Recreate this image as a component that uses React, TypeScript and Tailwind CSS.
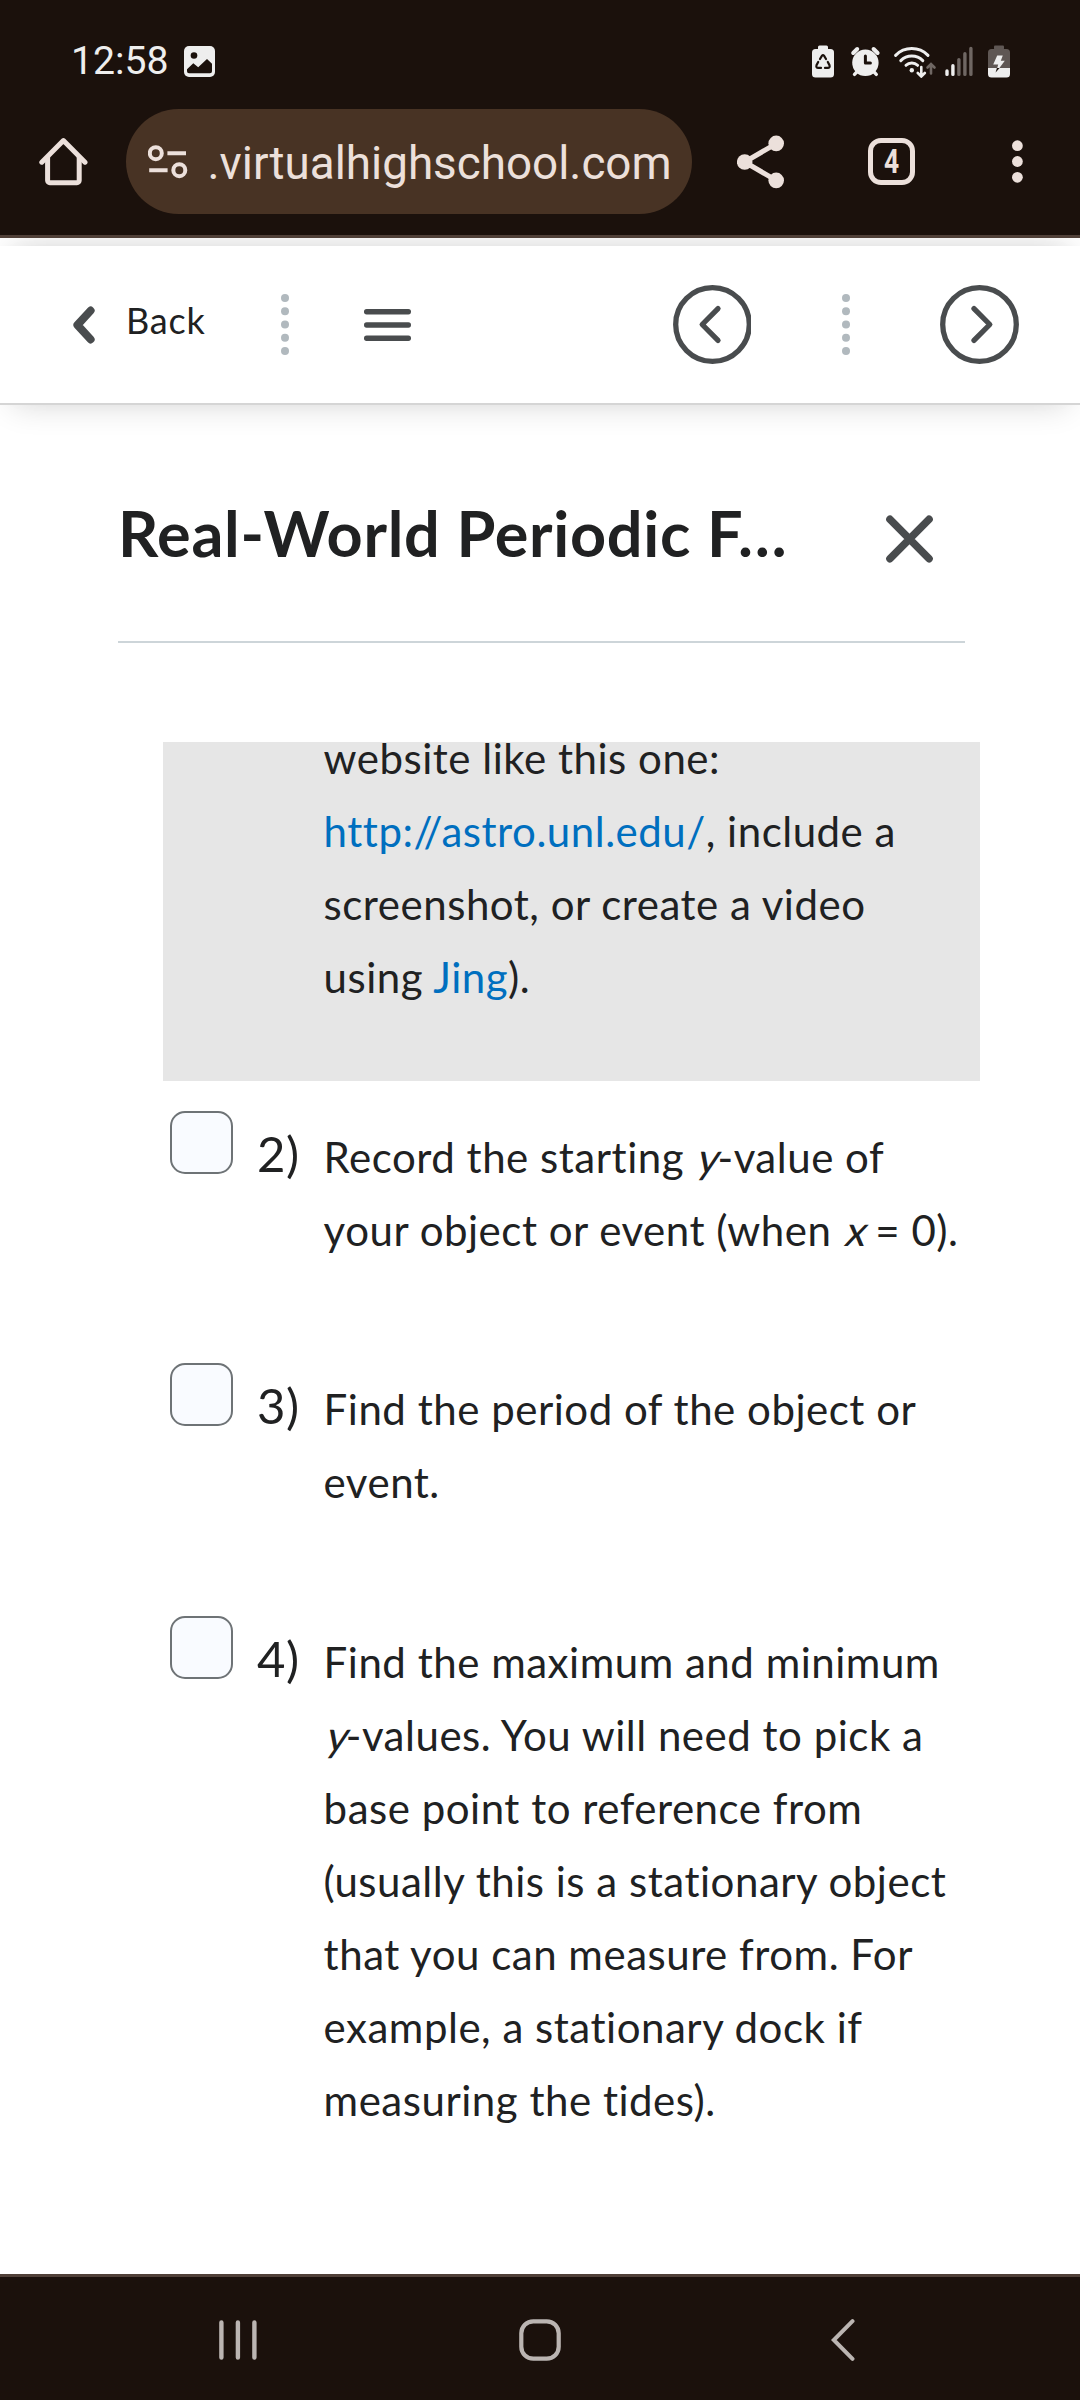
interface Task {
  label: string;
  content: React.ReactNode;
}

// slanted regular weight, leaning around the text baseline
function Variable({ name }: { name: string }) {
  return <em className="inline-block origin-[0_72%] -skew-x-14 not-italic">{name}</em>;
}

const tasks: Task[] = [
  {
    label: "2)",
    content: (
      <>
        Record the starting <Variable name="y" />
        -value of your object or event (when <Variable name="x" /> = 0).
      </>
    ),
  },
  {
    label: "3)",
    content: <>Find the period of the object or event.</>,
  },
  {
    label: "4)",
    content: (
      <>
        Find the maximum and minimum <Variable name="y" />
        -values. You will need to pick a base point to reference from (usually this is a
        stationary object that you can measure from. For example, a stationary dock if measuring
        the tides).
      </>
    ),
  },
];

function StatusIcons() {
  return (
    <div className="flex items-center">
      {/* battery protection */}
      <svg width="22" height="33" viewBox="0 0 22 33" fill="none">
        <rect x="6" y="0.5" width="10" height="7" rx="1.5" fill="#eeeeee" />
        <rect y="4" width="22" height="28.5" rx="3.5" fill="#eeeeee" />
        <path
          d="M8 14 10 10.6Q11 9.4 12 10.6L14 14M6.2 17 4.5 20.2Q3.8 22.9 6.2 22.9H9M15.8 17l1.7 3.2Q18.2 22.9 15.8 22.9H13"
          stroke="#1b110c"
          strokeWidth="2.2"
          strokeLinecap="round"
        />
      </svg>
      {/* alarm */}
      <svg className="ml-4" width="31" height="33" viewBox="0 -1 31 33" fill="none">
        <circle cx="15.4" cy="16.8" r="13.2" fill="#eeeeee" />
        <path d="M3.2 7 7.2 3M23.6 3l4 4" stroke="#eeeeee" strokeWidth="4" strokeLinecap="round" />
        <path d="m4.5 28.4 3.5-3.6M26.3 28.4l-3.5-3.6" stroke="#eeeeee" strokeWidth="3.4" strokeLinecap="round" />
        <path d="M15.4 10v7h5" stroke="#1b110c" strokeWidth="3" strokeLinecap="round" strokeLinejoin="round" />
      </svg>
      {/* wifi */}
      <svg className="ml-3" width="44" height="33" viewBox="0 0 44 33" fill="none" strokeLinecap="round">
        <g stroke="#eeeeee" strokeWidth="3">
          <path d="M2.6 10.4a22.7 22.7 0 0 1 32.4 0" />
          <path d="M7.8 15.6a15.5 15.5 0 0 1 22 0" />
          <path d="M13 20.3a8.3 8.3 0 0 1 11.6 0" />
        </g>
        <circle cx="18.8" cy="25.2" r="2.2" fill="#eeeeee" />
        <path d="M28.3 22v9M24.8 28l3.5 3.5 3.5-3.5" stroke="#eeeeee" strokeWidth="2.6" />
        <path d="M38 28.5v-9M34.5 22.5 38 19l3.5 3.5" stroke="#6f6763" strokeWidth="2.6" />
      </svg>
      {/* signal */}
      <svg className="ml-2" width="29" height="33" viewBox="0 -1 29 33" fill="none" strokeWidth="3.4" strokeLinecap="round">
        <path d="M2 25v3.4M7.9 19.8v8.6" stroke="#eeeeee" />
        <path d="M13.9 13.6v14.8M19.9 7.8v20.6M25.9 2.4v26" stroke="#6f6763" />
      </svg>
      {/* charging */}
      <svg className="ml-3.5" width="22" height="33" viewBox="0 0 22 33">
        <rect x="6" y="0.5" width="10" height="4" rx="1" fill="#5f5754" />
        <path d="M3.5 4h15A3.5 3.5 0 0 1 22 7.5V23H0V7.5A3.5 3.5 0 0 1 3.5 4z" fill="#5f5754" />
        <path d="M0 23h22v6a3.5 3.5 0 0 1-3.5 3.5h-15A3.5 3.5 0 0 1 0 29z" fill="#eeeeee" />
        <path d="M9.2 10.5h5.6l-2 5.3h4L11.4 23H9.2l1-3.5H5.2z" fill="#eeeeee" />
        <path d="M8.9 23h2.7L7.6 27.4z" fill="#1b110c" />
      </svg>
    </div>
  );
}

function StatusBar() {
  return (
    <div className="flex h-[109px] items-center pt-[13px] pr-[70px] pl-[71px] text-[#eeeeee]">
      <span className="pt-0.5 text-[39.2px] leading-none">12:58</span>
      <svg className="mr-auto ml-[15px]" width="31" height="31" viewBox="0 0 31 31">
        <rect width="31" height="31" rx="5" fill="#eeeeee" />
        <circle cx="10" cy="9.5" r="3.3" fill="#1b110c" />
        <path d="M3 23.2 9.3 17.3 14.2 21.2 23 13l5 4.8v7.4a2 2 0 0 1-2 2H5a2 2 0 0 1-2-2z" fill="#1b110c" />
      </svg>
      <StatusIcons />
    </div>
  );
}

function AddressBar() {
  return (
    <div className="flex h-[105px] items-center pl-[39px] text-[#ece0db]">
      <svg width="49" height="49" viewBox="0 0 49 49" fill="none" stroke="#ece0db" strokeWidth="5">
        <path d="M2.8 25.2 24.4 3.6 46 25.2" strokeLinecap="round" strokeLinejoin="round" />
        <path d="M8.6 20v23.5a2.2 2.2 0 0 0 2.2 2.2h27.2a2.2 2.2 0 0 0 2.2-2.2V20" />
      </svg>
      <div className="ml-[38px] flex h-[105px] w-[566px] items-center rounded-full bg-[#483324] pl-[22px]">
        <svg width="40" height="34" viewBox="0 0 40 34" fill="none" stroke="#ece0db" strokeWidth="4">
          <circle cx="7.8" cy="8.2" r="6" />
          <path d="M19.4 8.2H38M1.2 25.2h18.4" />
          <circle cx="31.3" cy="25.2" r="6" />
        </svg>
        <span className="ml-[19.5px] pt-1 text-[45.8px] leading-none">.virtualhighschool.com</span>
      </div>
      <svg className="ml-[45px]" width="47" height="54" viewBox="0 0 47 54">
        <path d="M39.3 8.6 7.6 27l31.7 18.4" fill="none" stroke="#ece0db" strokeWidth="5" />
        <circle cx="7.7" cy="27" r="7.8" fill="#ece0db" />
        <circle cx="39.2" cy="8.4" r="7.8" fill="#ece0db" />
        <circle cx="39.2" cy="45.4" r="7.8" fill="#ece0db" />
      </svg>
      <div className="ml-[84px] flex size-[47px] items-center justify-center rounded-[13px] border-5 border-[#ece0db]">
        <span className="scale-x-[0.8] pb-px text-[33px] leading-none font-bold">4</span>
      </div>
      <svg className="ml-[97px]" width="11" height="43" viewBox="0 0 11 43" fill="#ece0db">
        <circle cx="5.4" cy="5.7" r="5.4" />
        <circle cx="5.4" cy="21.5" r="5.4" />
        <circle cx="5.4" cy="37.3" r="5.4" />
      </svg>
    </div>
  );
}

function Dots({ className }: { className: string }) {
  return (
    <svg className={className} width="8" height="61" viewBox="0 0 8 61" fill="#b1b9be">
      {[4.1, 17.3, 30.5, 43.7, 56.9].map((cy) => (
        <circle key={cy} cx="4" cy={cy} r="4" />
      ))}
    </svg>
  );
}

function LessonNav() {
  return (
    <nav className="relative flex h-[159px] items-center border-b-2 border-[#d5d5d5] bg-white pl-[73px] shadow-[0_12px_30px_-12px_rgba(0,0,0,0.16),0_-12px_30px_-12px_rgba(0,0,0,0.16)]">
      <svg width="22" height="38" viewBox="0 0 22 38" fill="none" stroke="#494c4e" strokeWidth="8" strokeLinecap="round" strokeLinejoin="round">
        <path d="M17.6 4.6 4.4 19l13.2 14.4" />
      </svg>
      <span className="ml-[31px] w-[80px] pb-[9px] text-[36px] leading-none tracking-[0.8px]">Back</span>
      <Dots className="ml-[74.5px]" />
      <svg className="ml-[75.5px]" width="47" height="32" viewBox="0 0 47 32" fill="#494c4e">
        <rect width="47" height="5.4" rx="2.6" />
        <rect y="13.3" width="47" height="5.4" rx="2.6" />
        <rect y="26.5" width="47" height="5.4" rx="2.6" />
      </svg>
      <svg className="ml-[262px]" width="78" height="79" viewBox="0 0 78 79" fill="none" stroke="#494c4e" strokeWidth="5.3">
        <circle cx="39.5" cy="39.5" r="36.8" />
        <path d="M45 23.6 29.2 39.5 45 55.4" strokeLinecap="round" strokeLinejoin="round" />
      </svg>
      <Dots className="ml-[90.5px]" />
      <svg className="ml-[90.5px]" width="79" height="79" viewBox="0 0 79 79" fill="none" stroke="#494c4e" strokeWidth="5.3">
        <circle cx="39.5" cy="39.5" r="36.8" />
        <path d="M34 23.6 49.8 39.5 34 55.4" strokeLinecap="round" strokeLinejoin="round" />
      </svg>
    </nav>
  );
}

export default function App() {
  return (
    <div className="flex h-[2400px] w-[1080px] flex-col overflow-hidden bg-white font-[Roboto,sans-serif]">
      <header className="relative z-10 h-[238px] border-b-3 border-[#504038] bg-[#1b110c]">
        <StatusBar />
        <AddressBar />
      </header>

      <div className="flex-1 pt-2 font-[Lato,sans-serif] text-[#202122]">
        <LessonNav />

        <div className="ml-[118px] flex h-[238px] w-[847px] items-start border-b-2 border-[#cdd5d9] pt-[88px]">
          <h1 className="w-[680px] text-[63px] leading-[80px] font-bold tracking-[0.7px] whitespace-nowrap">
            Real-World Periodic F…
          </h1>
          <svg className="mt-[22px] ml-[88px]" width="47" height="48" viewBox="0 0 47 48" stroke="#494c4e" strokeWidth="7.6" strokeLinecap="round">
            <path d="m4 4.3 39 39.4M43 4.3 4 43.7" />
          </svg>
        </div>

        <div className="text-[42px] leading-[73.1px] tracking-[0.52px]">
          <div className="mt-[99px] ml-[163px] h-[339px] w-[817px] overflow-hidden bg-[#e6e6e6] pl-[160.6px]">
            <p className="-mt-[20px] w-[640px]">
              website like this one: <a className="text-[#006fbf]">http://astro.unl.edu/</a>, include
              a screenshot, or create a video using <a className="text-[#006fbf]">Jing</a>).
            </p>
          </div>

          {tasks.map((task) => (
            <div key={task.label} className="flex items-start pb-[66.2px] pl-[170px]">
              <input
                type="checkbox"
                className="mt-[30px] size-[63px] shrink-0 appearance-none rounded-[15px] border-2 border-[#6e7376] bg-[#f9fbff]"
              />
              <span className="mt-[36px] ml-[24px] w-[66.6px] shrink-0 text-[49px]">{task.label}</span>
              <p className="mt-[40px] w-[640px]">{task.content}</p>
            </div>
          ))}
        </div>
      </div>

      {/* android navigation */}
      <footer className="flex h-[126px] shrink-0 items-center border-t-3 border-[#504038] bg-[#1b110c] pt-[2px] pl-[219px]">
        <svg width="38" height="42" viewBox="0 0 38 42" stroke="#bbb5b2" strokeWidth="4.4" strokeLinecap="round">
          <path d="M2.4 3.5v35M18.9 3.5v35M35.4 3.5v35" />
        </svg>
        <svg className="ml-[262px]" width="42" height="42" viewBox="0 0 42 42" fill="none" stroke="#bbb5b2" strokeWidth="4.2">
          <rect x="2.3" y="2.3" width="37.4" height="37.4" rx="12" />
        </svg>
        <svg className="ml-[270px]" width="24" height="42" viewBox="0 0 24 42" fill="none" stroke="#bbb5b2" strokeWidth="4" strokeLinecap="round">
          <path d="M21.5 2.2 2.8 21l18.7 18.8" />
        </svg>
      </footer>
    </div>
  );
}
